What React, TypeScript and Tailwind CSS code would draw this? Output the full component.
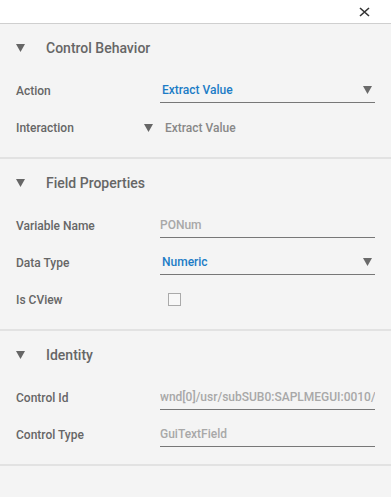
import React from "react";

type Row =
  | { kind: "select"; label: string; value: string }
  | { kind: "text"; label: string; value: string }
  | { kind: "inline"; label: string; value: string }
  | { kind: "checkbox"; label: string };

type Section = { title: string; rows: Row[] };

const sections: Section[] = [
  {
    title: "Control Behavior",
    rows: [
      { kind: "select", label: "Action", value: "Extract Value" },
      { kind: "inline", label: "Interaction", value: "Extract Value" },
    ],
  },
  {
    title: "Field Properties",
    rows: [
      { kind: "text", label: "Variable Name", value: "PONum" },
      { kind: "select", label: "Data Type", value: "Numeric" },
      { kind: "checkbox", label: "Is CView" },
    ],
  },
  {
    title: "Identity",
    rows: [
      { kind: "text", label: "Control Id", value: "wnd[0]/usr/subSUB0:SAPLMEGUI:0010/" },
      { kind: "text", label: "Control Type", value: "GuiTextField" },
    ],
  },
];

function Caret({ className }: { className?: string }) {
  return (
    <svg width="9" height="8" viewBox="0 0 9 8" className={className}>
      <path d="M0 0 H9 L4.5 8 Z" fill="currentColor" />
    </svg>
  );
}

function FieldRow({ row }: { row: Row }) {
  return (
    <div className="flex h-[37px] items-center">
      <div className="w-[144px] shrink-0 pl-4 text-[12px] font-medium text-[#666]">
        {row.label}
      </div>
      {row.kind === "select" ? (
        <div className="ml-4 mr-4 flex h-6 flex-1 items-center justify-between border-b border-[#777] pl-[2px] pr-[3px]">
          <span className="text-[12px] font-medium text-[#1c7cc6]">
            {row.value}
          </span>
          <Caret className="text-[#6a6a6a]" />
        </div>
      ) : null}
      {row.kind === "text" ? (
        <div className="ml-4 mr-4 flex h-6 flex-1 items-center overflow-hidden whitespace-nowrap border-b border-[#777]">
          <span className="text-[12px] font-medium text-[#a8a8a8]">
            {row.value}
          </span>
        </div>
      ) : null}
      {row.kind === "inline" ? (
        <div className="flex items-center">
          <Caret className="text-[#666]" />
          <span className="ml-3 text-[12px] font-medium text-[#888]">
            {row.value}
          </span>
        </div>
      ) : null}
      {row.kind === "checkbox" ? (
        <div className="ml-6 h-[13px] w-[13px] border border-[#aaa] bg-[#f8f8f8]" />
      ) : null}
    </div>
  );
}

export default function App() {
  return (
    <div
      className="h-[497px] w-[391px] bg-[#f4f4f4]"
      style={{ fontFamily: "Roboto, 'Noto Sans', sans-serif" }}
    >
      <div className="flex h-6 items-center justify-end border-b border-[#cfcfcf] bg-white pr-[21px]">
        <svg width="11" height="10" viewBox="0 0 11 10" className="text-[#333]">
          <path
            d="M1 1 L10 9 M10 1 L1 9"
            stroke="currentColor"
            strokeWidth="1.6"
            fill="none"
          />
        </svg>
      </div>
      {sections.map((section) => (
        <div
          key={section.title}
          className="border-b-2 border-[#e2e2e2] pb-[11px]"
        >
          <div className="flex h-12 items-center pl-4">
            <Caret className="text-[#666]" />
            <span className="ml-[21px] text-[14px] font-medium text-[#666]">
              {section.title}
            </span>
          </div>
          {section.rows.map((row) => (
            <FieldRow key={row.label} row={row} />
          ))}
        </div>
      ))}
    </div>
  );
}
